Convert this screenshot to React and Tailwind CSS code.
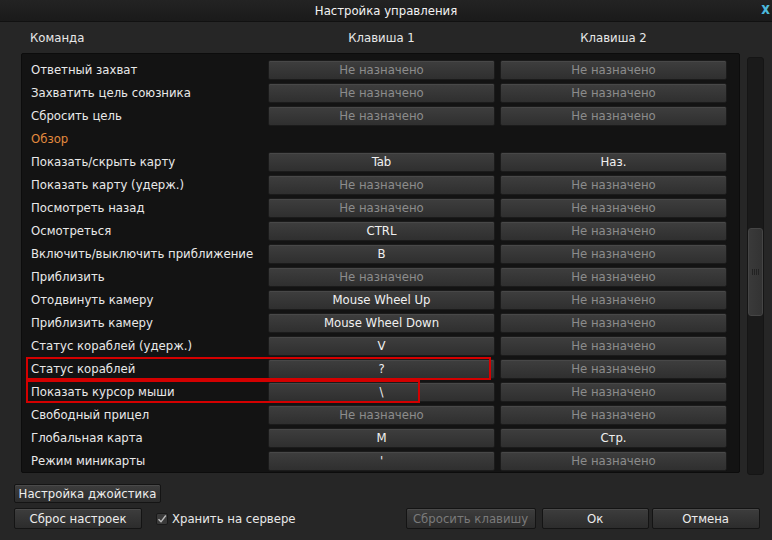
import React from "react";

const NA = "Не назначено";
const rows = [
  { l: "Ответный захват", a: NA, b: NA },
  { l: "Захватить цель союзника", a: NA, b: NA },
  { l: "Сбросить цель", a: NA, b: NA },
  { l: "Обзор", section: true },
  { l: "Показать/скрыть карту", a: "Tab", b: "Наз." },
  { l: "Показать карту (удерж.)", a: NA, b: NA },
  { l: "Посмотреть назад", a: NA, b: NA },
  { l: "Осмотреться", a: "CTRL", b: NA },
  { l: "Включить/выключить приближение", a: "B", b: NA },
  { l: "Приблизить", a: NA, b: NA },
  { l: "Отодвинуть камеру", a: "Mouse Wheel Up", b: NA },
  { l: "Приблизить камеру", a: "Mouse Wheel Down", b: NA },
  { l: "Статус кораблей (удерж.)", a: "V", b: NA },
  { l: "Статус кораблей", a: "?", b: NA },
  { l: "Показать курсор мыши", a: "\\", b: NA },
  { l: "Свободный прицел", a: NA, b: NA },
  { l: "Глобальная карта", a: "M", b: "Стр." },
  { l: "Режим миникарты", a: "'", b: NA },
];

function Key({ v }) {
  const na = v === NA;
  return (
    <div
      className={`h-[20px] w-[227px] rounded-[2px] border border-[#1b1b1b] bg-gradient-to-b from-[#3e3e3e] to-[#2f2f2f] shadow-[inset_0_1px_0_#484848] flex items-center justify-center text-[13px] leading-none ${
        na ? "text-[#8c8c8c]" : "text-[#f0f0f0]"
      }`}
    >
      {v}
    </div>
  );
}

function Btn({ children, className = "", disabled }) {
  return (
    <div
      className={`rounded-[2px] border border-[#141414] bg-gradient-to-b from-[#3d3d3d] to-[#2c2c2c] shadow-[inset_0_1px_0_#4a4a4a] flex items-center justify-center text-[13px] leading-none ${
        disabled ? "text-[#7a7a7a]" : "text-[#ededed]"
      } ${className}`}
    >
      {children}
    </div>
  );
}

export default function App() {
  return (
    <div
      className="w-[772px] h-[540px] bg-[#262626] flex flex-col overflow-hidden relative"
      style={{ fontFamily: '"DejaVu Sans Condensed", "DejaVu Sans", sans-serif' }}
    >
      {/* title bar */}
      <div className="h-[22px] shrink-0 bg-gradient-to-b from-[#232323] to-[#1a1a1a] border-b border-[#111] flex items-center justify-center relative">
        <span className="text-[13px] text-[#f2f2f2] leading-none">Настройка управления</span>
        <span className="absolute right-[2px] top-[2px] text-[15px] font-bold text-[#4cb8dc] leading-none">x</span>
      </div>
      {/* header */}
      <div className="h-[31px] shrink-0 flex items-center text-[13px] text-[#e8e8e8]">
        <div className="w-[268px] pl-[30px]">Команда</div>
        <div className="w-[227px] text-center">Клавиша 1</div>
        <div className="w-[5px]" />
        <div className="w-[227px] text-center">Клавиша 2</div>
      </div>
      {/* list + scrollbar */}
      <div className="flex shrink-0 pl-[21px] gap-[7px]">
        <div className="w-[719px] h-[420px] bg-[#131313] border border-[#0c0c0c] rounded-[2px] pt-[4px] overflow-hidden">
          {rows.map((r, i) => (
            <div key={i} className="h-[23px] flex items-center">
              <div
                className={`w-[246px] pl-[9px] text-[13px] whitespace-nowrap leading-none ${
                  r.section ? "text-[#e28a3e]" : "text-[#e9e9e9]"
                }`}
              >
                {r.l}
              </div>
              {!r.section && (
                <div className="flex gap-[5px]">
                  <Key v={r.a} />
                  <Key v={r.b} />
                </div>
              )}
            </div>
          ))}
        </div>
        <div className="w-[17px] h-[418px] mt-[4px] rounded-[3px] bg-[#1a1a1a] border border-[#151515] flex flex-col">
          <div className="h-[170px]" />
          <div className="h-[88px] rounded-[3px] bg-gradient-to-r from-[#3a3a3a] to-[#333] border border-[#454545] flex items-center justify-center">
            <div className="w-[7px] h-[6px] bg-[repeating-linear-gradient(90deg,#222_0_1px,transparent_1px_2px)]" />
          </div>
        </div>
      </div>
      {/* bottom */}
      <div className="pl-[14px] pt-[9px] flex flex-col gap-[5px]">
        <Btn className="w-[147px] h-[19px]">Настройка джойстика</Btn>
        <div className="flex items-center">
          <Btn className="w-[128px] h-[21px]">Сброс настроек</Btn>
          <div className="ml-[14px] w-[12px] h-[12px] rounded-[2px] bg-[#3a3a3a] border border-[#1a1a1a] flex items-center justify-center">
            <svg width="10" height="10" viewBox="0 0 10 10">
              <path d="M1.5 5.2 L4 7.8 L8.8 1.5" stroke="#bdbdbd" strokeWidth="1.4" fill="none" />
            </svg>
          </div>
          <span className="ml-[4px] text-[13px] text-[#e9e9e9]">Хранить на сервере</span>
          <Btn disabled className="ml-[110px] w-[130px] h-[21px]">Сбросить клавишу</Btn>
          <Btn className="ml-[6px] w-[107px] h-[21px]">Ок</Btn>
          <Btn className="ml-[3px] w-[108px] h-[21px]">Отмена</Btn>
        </div>
      </div>
      {/* red annotation boxes */}
      <div className="absolute left-[26px] top-[357px] w-[465px] h-[23px] border-2 border-[#d40000]" />
      <div className="absolute left-[26px] top-[380px] w-[394px] h-[23px] border-2 border-[#d40000]" />
    </div>
  );
}
